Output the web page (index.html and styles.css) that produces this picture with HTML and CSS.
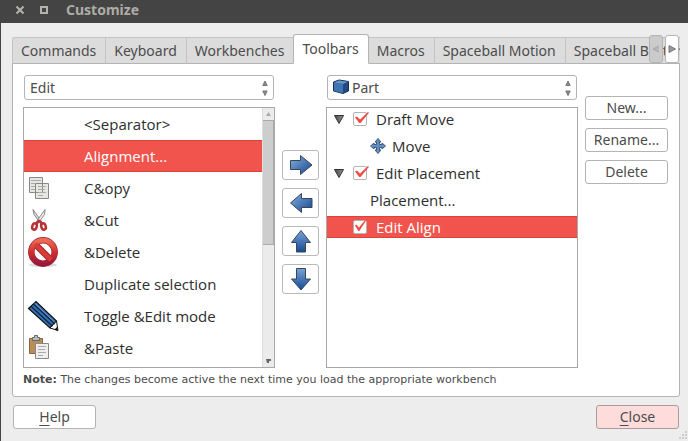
FILE: index.html
```html
<!DOCTYPE html>
<html lang="en">
<head>
<meta charset="utf-8">
<title>Customize</title>
<link rel="stylesheet" href="styles.css">
</head>
<body>
<svg class="defs" aria-hidden="true">
  <defs>
    <linearGradient id="blue" x1="0" y1="0" x2="1" y2="1"><stop offset="0" stop-color="#86b0dc"/><stop offset="1" stop-color="#14468f"/></linearGradient>
    <linearGradient id="blueDown" x1="0" y1="0" x2="0" y2="1"><stop offset="0" stop-color="#78a5d6"/><stop offset="1" stop-color="#174a92"/></linearGradient>
    <linearGradient id="red" x1="0" y1="0" x2="0" y2="1"><stop offset="0" stop-color="#ee6a52"/><stop offset=".5" stop-color="#d42f2c"/><stop offset="1" stop-color="#99183f"/></linearGradient>
    <linearGradient id="grey" x1="0" y1="0" x2="1" y2="0"><stop offset="0" stop-color="#444"/><stop offset="1" stop-color="#999"/></linearGradient>
  </defs>
</svg>
<header class="titlebar">
  <button class="winbtn" aria-label="Close window"><svg width="10" height="10" viewBox="0 0 10 10"><path d="M1.500 1.500l7 7M8.500 1.500l-7 7" fill="none" stroke="#b5b3ae" stroke-width="2"/></svg></button>
  <button class="winbtn" aria-label="Maximize window"><svg width="10" height="10" viewBox="0 0 10 10"><path d="M2 2h6v6h-6z" fill="none" stroke="#b5b3ae" stroke-width="2"/></svg></button>
  <h1>Customize</h1>
</header>
<main class="dialog">
  <div class="tabbar">
    <nav class="tabs" role="tablist">
      <button class="tab" role="tab">Commands</button>
      <button class="tab" role="tab">Keyboard</button>
      <button class="tab" role="tab">Workbenches</button>
      <button class="tab active" role="tab" aria-selected="true">Toolbars</button>
      <button class="tab" role="tab">Macros</button>
      <button class="tab" role="tab">Spaceball Motion</button>
      <button class="tab" role="tab">Spaceball Buttons</button>
    </nav>
    <div class="tabscroll">
      <button class="off" aria-label="Scroll tabs left"><svg width="8" height="8" viewBox="0 0 8 8"><path d="M7 1L1 4l6 3" fill="#b8b8b8" stroke="#a5a5a5"/></svg></button>
      <button aria-label="Scroll tabs right"><svg width="8" height="8" viewBox="0 0 8 8"><path d="M1 .5v7L7.500 4z" fill="#999" stroke="#777"/></svg></button>
    </div>
  </div>
  <section class="panel">
    <div class="columns">
      <div class="column">
        <div class="combo">
          <select aria-label="Category"><option>Edit</option></select>
          <svg class="spin" width="8" height="18" viewBox="0 0 8 18"><path d="M4 2l2.200 4.500H1.800zM4 16.500l2.200-4.500H1.800z" fill="#888" stroke="#777"/></svg>
        </div>
        <div class="listbox">
          <ul class="commands">
            <li><span class="icon"></span>&lt;Separator&gt;</li>
            <li class="selected"><span class="icon"></span>Alignment...</li>
            <li><span class="icon"><svg width="32" height="32" viewBox="0 0 32 32"><g fill="#e6e6e3" stroke="#888"><path d="M2.500 5.500h13v15h-13zM8.500 11.500h13v15h-13z"/></g><path d="M4 8.500h10M4 11.500h4M4 14.500h4M4 17.500h4M11 14.500h8M11 17.500h7M11 20.500h8M11 23.500h5" stroke="#aaa"/></svg></span>C&amp;opy</li>
            <li><span class="icon"><svg width="32" height="32" viewBox="0 0 32 32"><g stroke="#888"><path d="M6 5.500l1 5 6.500 9 1.500-1.500z" fill="#ddd"/><path d="M18 5.500l-.500 5-6.500 9-1.500-2z" fill="#eee"/></g><g fill="none" stroke="#b83236" stroke-width="2.500"><ellipse cx="7.500" cy="22.500" rx="2.200" ry="3.200" transform="rotate(20 7.500 22.500)"/><ellipse cx="16.500" cy="22.500" rx="2.200" ry="3.200" transform="rotate(-20 16.500 22.500)"/><path d="M9 19.500l3-2.500 3 2.500"/></g></svg></span>&amp;Cut</li>
            <li><span class="icon"><svg width="32" height="32" viewBox="0 0 32 32"><ellipse cx="16" cy="29" rx="14" ry="2" fill="#ddd"/><g fill="none"><g stroke="#9c2634" stroke-width="6.500"><circle cx="16" cy="16" r="11.700"/><path d="M8 8l16 16"/></g><circle cx="16" cy="16" r="11.700" stroke="url(#red)" stroke-width="5"/><path d="M8 8l16 16" stroke="#d83c34" stroke-width="4.500"/></g></svg></span>&amp;Delete</li>
            <li><span class="icon"></span>Duplicate selection</li>
            <li><span class="icon"><svg width="32" height="32" viewBox="0 0 32 32"><path d="M1.500 8.500l7.500-7 20.500 19.500-6.500 7z" fill="#356fae" stroke="#111" stroke-width="1.200"/><path d="M23 28l6.500-7 1.500 9.500z" fill="#fff" stroke="#111"/><path d="M27.500 29.500l2.500-2.500 1 4z" fill="#111"/><path d="M4 6.300l21.500 20M6.500 4l21.500 20" stroke="#0c2242" stroke-width="1.200"/><path d="M7.500 3l20 19" stroke="#6c9ed3"/></svg></span>Toggle &amp;Edit mode</li>
            <li><span class="icon"><svg width="32" height="32" viewBox="0 0 32 32"><path d="M2.500 6.500h13v15h-13z" fill="#b98d55" stroke="#8b673c"/><path d="M5.500 8.500v-3h2v-2h3v2h2v3z" fill="#bbb" stroke="#666"/><path d="M8.500 11.500h13v15h-13z" fill="#eee" stroke="#888"/><path d="M11 14.500h8M11 17.500h7M11 20.500h8M11 23.500h5" stroke="#aaa"/></svg></span>&amp;Paste</li>
          </ul>
          <div class="scrollbar" aria-hidden="true">
            <span class="arrow"><svg width="5" height="4" viewBox="0 0 5 4"><path d="M2.500 0L5 4H0z" fill="#aaa"/></svg></span>
            <span class="thumb"></span>
            <span class="arrow end"><svg width="5" height="4" viewBox="0 0 5 4"><path d="M0 0h5v2H3v2H1z" fill="#666"/></svg></span>
          </div>
        </div>
      </div>
      <div class="moves">
        <button aria-label="Add"><svg width="24" height="24" viewBox="0 0 24 24"><path d="M1.500 7.500h10v-5L23 12 11.500 21.500v-5h-10z" fill="url(#blue)" stroke="#36475c"/></svg></button>
        <button aria-label="Remove"><svg width="24" height="24" viewBox="0 0 24 24"><path d="M23 7.500H12.500v-5L1.500 12l11 9.500v-5H23z" fill="url(#blue)" stroke="#36475c"/></svg></button>
        <button aria-label="Move up"><svg width="24" height="24" viewBox="0 0 24 24"><path d="M12 1.500l9.500 12h-5V23h-9v-9.500h-5z" fill="url(#blueDown)" stroke="#36475c"/></svg></button>
        <button aria-label="Move down"><svg width="24" height="24" viewBox="0 0 24 24"><path d="M12 23l9.500-11h-5V1.500h-9V12h-5z" fill="url(#blueDown)" stroke="#36475c"/></svg></button>
      </div>
      <div class="column">
        <div class="combo with-icon">
          <svg class="lead" width="16" height="16" viewBox="0 0 16 16"><path d="M.500 3L6 1l9.500 1.500V12L10 14.500.500 12z" fill="#2a5a9a" stroke="#17304f"/><path d="M1 3.500l5-2 9 1.500-5 2z" fill="#6796c9"/><path d="M10 5l5-2v9l-5 2z" fill="#204985"/><path d="M1 3.500L10 5v9l-9-2z" fill="#3f74b2"/></svg>
          <select aria-label="Workbench"><option>Part</option></select>
          <svg class="spin" width="8" height="18" viewBox="0 0 8 18"><path d="M4 2l2.200 4.500H1.800zM4 16.500l2.200-4.500H1.800z" fill="#888" stroke="#777"/></svg>
        </div>
        <div class="listbox">
          <ul class="tree">
            <li><svg class="twist" width="10" height="9" viewBox="0 0 10 9"><path d="M.500.500h9L5 8.500z" fill="url(#grey)" stroke="#333"/></svg><label><input type="checkbox" checked>Draft Move</label></li>
            <li class="child"><svg width="16" height="16" viewBox="0 0 16 16"><path d="M8 .500l3 3.500H9.500v2.500H12V5l3.500 3-3.500 3V9.500H9.500V12H11l-3 3.500L5 12h1.500V9.500H4V11L.500 8 4 5v1.500h2.500V4H5z" fill="#5f8fc7" stroke="#40566f"/></svg>Move</li>
            <li><svg class="twist" width="10" height="9" viewBox="0 0 10 9"><path d="M.500.500h9L5 8.500z" fill="url(#grey)" stroke="#333"/></svg><label><input type="checkbox" checked>Edit Placement</label></li>
            <li class="child">Placement...</li>
            <li class="selected"><span class="twist"></span><label><input type="checkbox" checked>Edit Align</label></li>
          </ul>
        </div>
      </div>
      <div class="actions">
        <button class="btn">New...</button>
        <button class="btn">Rename...</button>
        <button class="btn">Delete</button>
      </div>
    </div>
    <p class="note"><b>Note:</b> The changes become active the next time you load the appropriate workbench</p>
  </section>
  <footer class="footer">
    <button class="btn"><u>H</u>elp</button>
    <button class="btn close"><u>C</u>lose</button>
  </footer>
  <svg class="grip" width="10" height="10" viewBox="0 0 10 10" aria-hidden="true"><path d="M7 1h2v2H7zM4 4h2v2H4zM7 4h2v2H7zM1 7h2v2H1zM4 7h2v2H4zM7 7h2v2H7z" fill="#ccc"/></svg>
</main>
</body>
</html>
```

FILE: styles.css
```css
* { box-sizing: border-box; }
body {
  margin: 0;
  min-height: 100vh;
  display: flex;
  flex-direction: column;
  background: #ededed;
  color: #4c4c4c;
  font: 14px/20px "Noto Sans", "Open Sans", sans-serif;
}
button, select { font: inherit; color: inherit; }
svg { display: block; flex: none; }
ul { list-style: none; margin: 0; padding: 0; }
.defs { position: absolute; width: 0; height: 0; }

.titlebar {
  display: flex;
  align-items: center;
  height: 23px;
  padding: 0 15px 4px;
  background: #444;
}
.winbtn {
  width: 10px;
  margin-right: 14px;
  padding: 0;
  border: 0;
  background: none;
}
.titlebar h1 {
  margin: 0 0 0 3px;
  color: #aeaca7;
  font-size: 14px;
  line-height: 20px;
}

.dialog {
  flex: 1;
  position: relative;
  border-left: 1px solid #444;
  padding: 11px 8px 12px 11px;
}

.tabbar { position: relative; z-index: 1; margin-bottom: -1px; }
.tabs {
  display: flex;
  align-items: flex-end;
  height: 30px;
  overflow: hidden;
}
.tab {
  flex: none;
  height: 27px;
  padding: 0 9px 0 8px;
  border: 1px solid #c3c3c3;
  border-right: 0;
  border-bottom-color: #b4b4b4;
  background: #dcdcdc;
}
.tab:first-child { border-top-left-radius: 3px; }
.tab.active {
  height: 30px;
  border: 1px solid #b4b4b4;
  border-bottom-color: #fff;
  border-radius: 3px 3px 0 0;
  background: #fff;
}
.tab.active + .tab { border-left: 0; }
.tabscroll {
  position: absolute;
  top: 1px;
  right: 1px;
  display: flex;
  gap: 2px;
}
.tabscroll button {
  display: grid;
  place-items: center;
  width: 14px;
  height: 28px;
  padding: 0;
  border: 1px solid #b4b4b4;
  border-radius: 3px;
  background: #fff;
}
.tabscroll .off { background: #cbcbcb; }

.panel {
  padding: 11px 11px 8px 10px;
  border: 1px solid #b4b4b4;
  border-radius: 0 0 3px 3px;
  background: #fff;
}
.columns {
  display: grid;
  grid-template-columns: 1fr 37px 1fr 83px;
  gap: 7px;
}
.column { display: flex; flex-direction: column; gap: 7px; }

.combo { position: relative; margin: 0 1px; }
.combo select {
  display: block;
  width: 100%;
  height: 25px;
  padding: 0 20px 0 5px;
  border: 1px solid #b4b4b4;
  border-radius: 3px;
  background: #fff;
  appearance: none;
}
.combo.with-icon select { padding-left: 24px; }
.spin { position: absolute; top: 4px; right: 5px; }
.lead { position: absolute; top: 4px; left: 6px; }

.listbox {
  flex: 1;
  display: flex;
  border: 1px solid #a9a9a9;
  color: #2e2e2e;
  font: 15px/20px "Open Sans", "Noto Sans", sans-serif;
}
.commands { flex: 1; padding-bottom: 3px; }
.commands li {
  display: flex;
  align-items: center;
  height: 32px;
  padding-left: 3px;
}
.icon { flex: none; width: 57px; }
.listbox .selected {
  background: #f1544d;
  box-shadow: inset 0 1px #d9443d, inset 0 -1px #d9443d;
  color: #fff;
}
.scrollbar {
  display: flex;
  flex-direction: column;
  width: 12px;
  background: #ebebeb;
  border-left: 1px solid #ddd;
}
.arrow { display: grid; place-items: center; height: 12px; }
.arrow.end { margin-top: auto; }
.thumb { height: 125px; border: 1px solid #a9a9a9; border-left: 0; background: #cdcdcd; }

.moves { display: flex; flex-direction: column; justify-content: center; gap: 8px; }
.moves button {
  display: grid;
  place-items: center;
  height: 30px;
  padding: 0;
  border: 1px solid #b9b9b9;
  border-radius: 3px;
  background: #fff;
}

.tree { flex: 1; display: flex; flex-direction: column; gap: 5px; }
.tree li { display: flex; align-items: center; height: 22px; padding-left: 7px; }
.tree .child { gap: 6px; padding-left: 43px; }
.twist { width: 10px; margin-right: 9px; }
.tree label { display: flex; align-items: center; gap: 9px; }
.tree input {
  position: relative;
  width: 14px;
  height: 14px;
  margin: 0;
  border: 1px solid #b4b4b4;
  border-radius: 2px;
  background: #fff;
  appearance: none;
}
.tree input:checked::before {
  content: "";
  position: absolute;
  top: -1px;
  left: 1px;
  width: 14px;
  height: 11px;
  background: #ef4f49;
  clip-path: polygon(0 50%, 14% 42%, 36% 68%, 92% 0, 100% 6%, 40% 100%, 30% 100%);
}
.tree .selected input::before { width: 11px; }

.actions { display: flex; flex-direction: column; gap: 8px; padding-top: 21px; }
.btn {
  width: 83px;
  height: 24px;
  padding: 0;
  border: 1px solid #b4b4b4;
  border-radius: 3px;
  background: #fff;
}
.btn u { text-underline-offset: 3px; }
.note {
  margin: 4px 0 0;
  font: 11px/16px "DejaVu Sans", sans-serif;
}
.footer {
  display: flex;
  justify-content: space-between;
  padding: 8px 1px 0;
}
.btn.close { background: #fddcdb; border-color: #ab9c9c; }
.grip { position: absolute; right: 0; bottom: 1px; }
```
